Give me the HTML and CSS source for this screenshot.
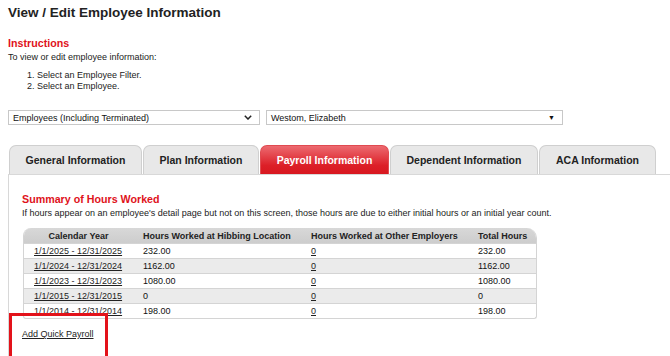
FILE: index.html
```html
<!DOCTYPE html>
<html>
<head>
	<title>View / Edit Employee Information</title>
	<link rel="stylesheet" href="styles.css">
</head>
<body>
   <h1 class="title">View / Edit Employee Information</h1>

   <h2 class="red-head">Instructions</h2>
   <p class="intro">To view or edit employee information:</p>
   <ol class="steps">
      <li>Select an Employee Filter.</li>
      <li>Select an Employee.</li>
   </ol>

   <div class="filters">
      <div class="select filter">
         <span>Employees (Including Terminated)</span>
         <svg class="chev" width="8" height="5" viewBox="0 0 8 5"><path d="M0.8 0.8 L4 4 L7.2 0.8" fill="none" stroke="#222" stroke-width="1.5"/></svg>
      </div>
      <div class="select person">
         <span>Westom, Elizabeth</span>
         <span class="tri">&#9660;</span>
      </div>
   </div>

   <div class="tabs">
      <div class="tab t-general">General Information</div>
      <div class="tab t-plan">Plan Information</div>
      <div class="tab t-payroll active">Payroll Information</div>
      <div class="tab t-dep">Dependent Information</div>
      <div class="tab t-aca">ACA Information</div>
   </div>

   <div class="panel">
      <h2 class="red-head summary">Summary of Hours Worked</h2>
      <p class="note">If hours appear on an employee's detail page but not on this screen, those hours are due to either initial hours or an initial year count.</p>

      <table class="hours">
         <thead>
            <tr>
               <th class="c1">Calendar Year</th>
               <th class="c2">Hours Worked at Hibbing Location</th>
               <th class="c3">Hours Worked at Other Employers</th>
               <th class="c4">Total Hours</th>
            </tr>
         </thead>
         <tbody>
            <tr><td><a href="#">1/1/2025 - 12/31/2025</a></td><td>232.00</td><td><a href="#">0</a></td><td>232.00</td></tr>
            <tr><td><a href="#">1/1/2024 - 12/31/2024</a></td><td>1162.00</td><td><a href="#">0</a></td><td>1162.00</td></tr>
            <tr><td><a href="#">1/1/2023 - 12/31/2023</a></td><td>1080.00</td><td><a href="#">0</a></td><td>1080.00</td></tr>
            <tr><td><a href="#">1/1/2015 - 12/31/2015</a></td><td>0</td><td><a href="#">0</a></td><td>0</td></tr>
            <tr><td><a href="#">1/1/2014 - 12/31/2014</a></td><td>198.00</td><td><a href="#">0</a></td><td>198.00</td></tr>
         </tbody>
      </table>

      <a class="quick" href="#">Add Quick Payroll</a>
      <div class="mark"></div>
   </div>
</body>
</html>
```

FILE: styles.css
```css
body{
	margin: 0;
	padding: 0 0 0 8px;
	font-family: "Liberation Sans", Arial, sans-serif;
	font-size: 9px;
	color: #222;
	background: #fff;
	overflow: hidden;
}
.title{
	margin: 4px 0 0 0;
	font-size: 13.5px;
	line-height: 18px;
	font-weight: bold;
	color: #222;
}
.red-head{
	margin: 0;
	font-size: 10.7px;
	line-height: 14px;
	font-weight: bold;
	color: #e0121b;
}
.title + .red-head{
	margin-top: 14px;
}
.intro{
	margin: 1px 0 0 0;
	line-height: 12px;
}
.steps{
	margin: 7px 0 0 0;
	padding-left: 29px;
	line-height: 11px;
}
.filters{
	display: flex;
	gap: 6px;
	margin-top: 18px;
}
.select{
	display: flex;
	align-items: center;
	justify-content: space-between;
	box-sizing: border-box;
	height: 15px;
	padding: 0 7px 0 4px;
	border: 1px solid #c8c8c8;
	background: #fff;
	font-size: 9px;
	color: #111;
}
.filter{
	width: 252px;
}
.person{
	width: 297px;
}
.tri{
	font-size: 7px;
	color: #111;
}
.tabs{
	display: flex;
	margin-top: 20px;
	padding-left: 1px;
}
.tab{
	box-sizing: border-box;
	height: 29px;
	line-height: 28px;
	text-align: center;
	font-size: 10.5px;
	font-weight: bold;
	color: #222;
	background: #e8e8e8;
	border: 1px solid #cfcfcf;
	border-bottom: none;
	border-radius: 7px 7px 0 0;
	margin-right: 1px;
}
.t-general{ width: 133px; }
.t-plan{ width: 116px; }
.t-payroll{ width: 129px; }
.t-dep{ width: 148px; }
.t-aca{ width: 117px; }
.tab.active{
	color: #fff;
	border-color: #e04a50;
	background: linear-gradient(#ec6a70, #dc1f27 70%, #d81820);
}
.panel{
	position: relative;
	border-top: 1px solid #d8d8d8;
	border-left: 1px solid #d8d8d8;
	height: 200px;
	padding: 17px 0 0 13px;
}
.summary{
	margin: 0;
}
.note{
	margin: 1px 0 0 0;
	line-height: 12px;
}
.hours{
	margin: 9px 0 0 1px;
	border-collapse: separate;
	border-spacing: 0;
	width: 514px;
	font-size: 9px;
	white-space: nowrap;
	border-right: 1px solid #d4d4d4;
	border-bottom: 1px solid #d4d4d4;
	border-left: 1px solid #d4d4d4;
	border-radius: 8px 10px 3px 3px;
	overflow: hidden;
}
.hours th{
	height: 15px;
	padding: 0 0 0 10px;
	text-align: left;
	font-weight: bold;
	color: #222;
	background: linear-gradient(#d8d8d8, #cdcdcd);
}
.hours th.c1{
	text-align: center;
	padding: 0;
	width: 109px;
}
.hours .c2{ width: 158px; }
.hours .c3{ width: 157px; }
.hours td{
	height: 14px;
	padding: 0 0 0 10px;
	line-height: 14px;
	border-top: 1px solid #d4d4d4;
	color: #111;
}
.hours tbody tr:nth-child(even) td{
	background: #ebebeb;
}
.hours a{
	color: #222;
}
.quick{
	display: inline-block;
	margin-top: 9px;
	line-height: 12px;
	color: #222;
	font-size: 9px;
}
.mark{
	position: absolute;
	left: 0;
	top: 138px;
	width: 93px;
	height: 50px;
	border: 3px solid #e3121a;
}
```
